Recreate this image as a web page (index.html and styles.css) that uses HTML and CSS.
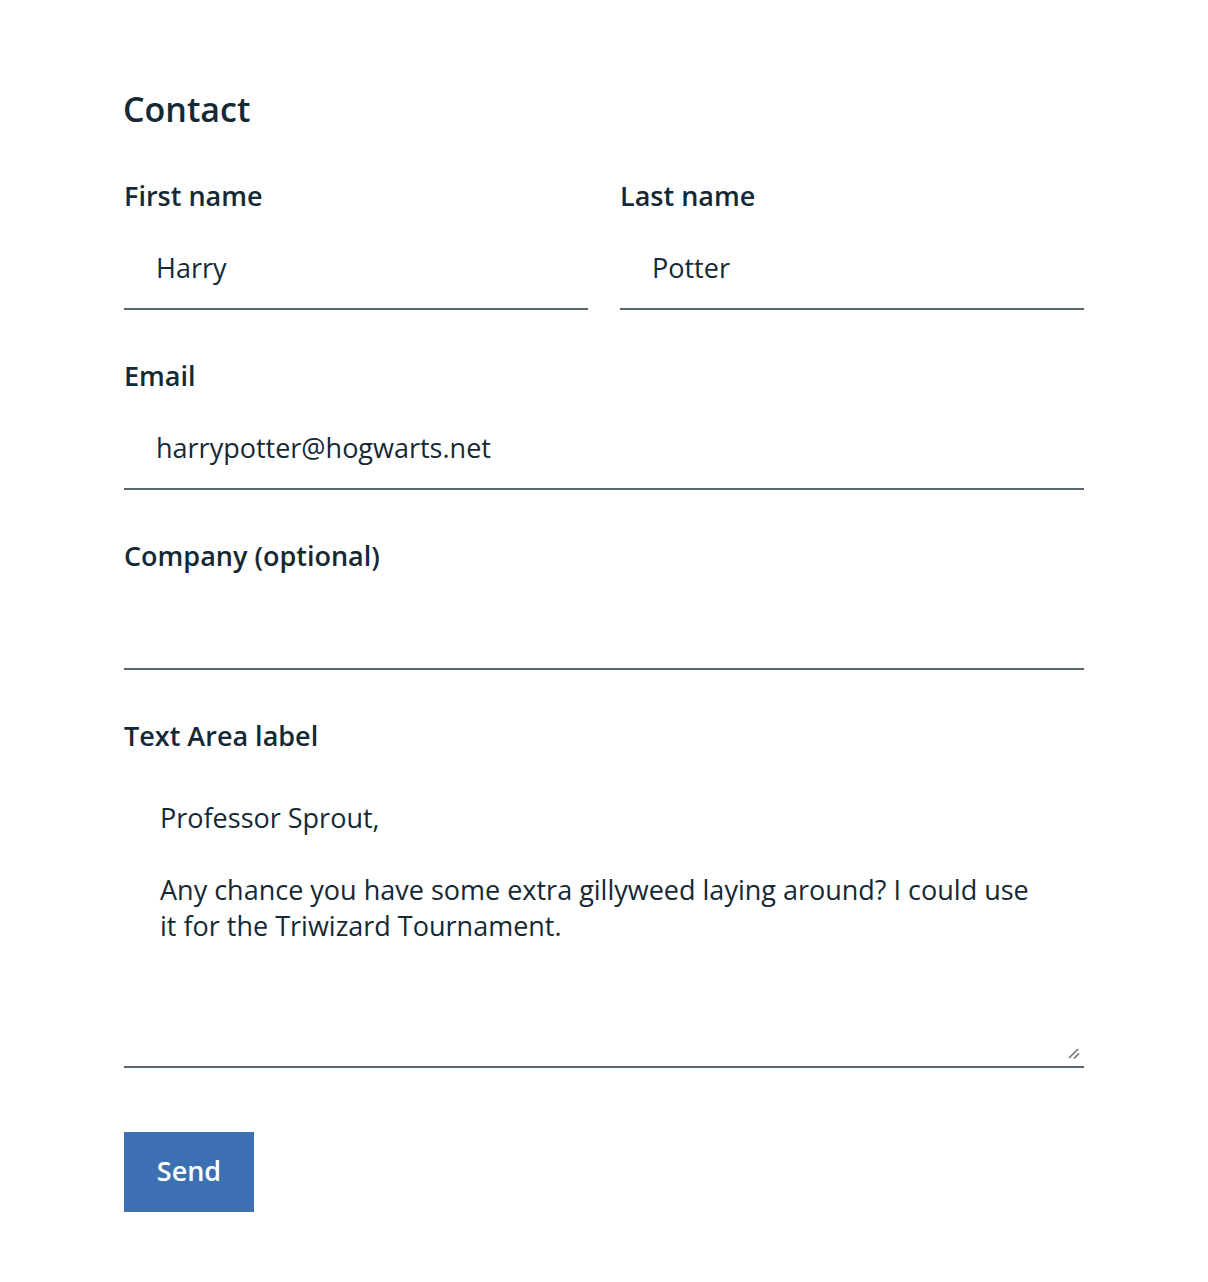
FILE: index.html
```html
<!DOCTYPE html>
<html lang="en">
<head>
<meta charset="utf-8">
<title>Contact</title>
<link rel="stylesheet" href="styles.css">
</head>
<body>
<main class="page">
  <form class="form" onsubmit="return false;">
    <h1 class="title">Contact</h1>
    <div class="row">
      <div class="field">
        <label class="label" for="first">First name</label>
        <input class="input" id="first" type="text" value="Harry">
      </div>
      <div class="field">
        <label class="label" for="last">Last name</label>
        <input class="input" id="last" type="text" value="Potter">
      </div>
    </div>
    <div class="field">
      <label class="label" for="email">Email</label>
      <input class="input" id="email" type="email" value="harrypotter@hogwarts.net">
    </div>
    <div class="field">
      <label class="label" for="company">Company (optional)</label>
      <input class="input" id="company" type="text" value="">
    </div>
    <div class="field">
      <label class="label" for="message">Text Area label</label>
      <div class="textarea-wrap">
        <textarea class="textarea" id="message">Professor Sprout,

Any chance you have some extra gillyweed laying around? I could use it for the Triwizard Tournament.</textarea>
        <svg class="grip" width="16" height="16" viewBox="0 0 16 16" aria-hidden="true">
          <line x1="3" y1="14" x2="12" y2="5" />
          <line x1="8" y1="14.5" x2="13" y2="9.5" />
        </svg>
      </div>
    </div>
    <div class="actions">
      <button class="button" type="submit">Send</button>
    </div>
  </form>
</main>
</body>
</html>
```

FILE: styles.css
```css
html, body {
  margin: 0;
  padding: 0;
  background: #ffffff;
}

body {
  font-family: "Open Sans", "Noto Sans", "Liberation Sans", sans-serif;
  color: #152935;
}

.page {
  padding: 86px 0 40px 124px;
}

.form {
  width: 960px;
  display: flex;
  flex-direction: column;
  gap: 48px;
}

.title {
  margin: 0 0 -2px -1px;
  font-size: 34px;
  line-height: 46px;
  font-weight: 600;
  color: #152935;
}

.row {
  display: grid;
  grid-template-columns: 1fr 1fr;
  gap: 32px;
}

.field {
  display: flex;
  flex-direction: column;
  gap: 18px;
}

.label {
  display: block;
  font-size: 27px;
  line-height: 36px;
  font-weight: 600;
  color: #152935;
}

.input {
  box-sizing: border-box;
  height: 78px;
  width: 100%;
  margin: 0;
  padding: 0 32px 5px 32px;
  border: 0;
  border-bottom: 2px solid #5a6872;
  border-radius: 0;
  background: transparent;
  font-family: inherit;
  font-size: 27px;
  color: #152935;
  outline: none;
}

.textarea-wrap {
  position: relative;
}

.textarea {
  display: block;
  box-sizing: border-box;
  height: 296px;
  width: 100%;
  margin: 0;
  padding: 28px 48px 0 36px;
  border: 0;
  border-bottom: 2px solid #5a6872;
  border-radius: 0;
  background: transparent;
  font-family: inherit;
  font-size: 27px;
  line-height: 36px;
  color: #152935;
  outline: none;
  resize: none;
  overflow: hidden;
}

.grip {
  position: absolute;
  right: 2px;
  bottom: 8px;
  display: block;
  stroke: #6a6a6a;
  stroke-width: 1.5;
  fill: none;
  pointer-events: none;
}

.actions {
  padding-top: 16px;
}

.button {
  width: 130px;
  height: 80px;
  padding: 0 0 4px 0;
  border: 0;
  border-radius: 0;
  background: #3d70b2;
  color: #ffffff;
  font-family: inherit;
  font-size: 27px;
  font-weight: 600;
  cursor: pointer;
}
```
